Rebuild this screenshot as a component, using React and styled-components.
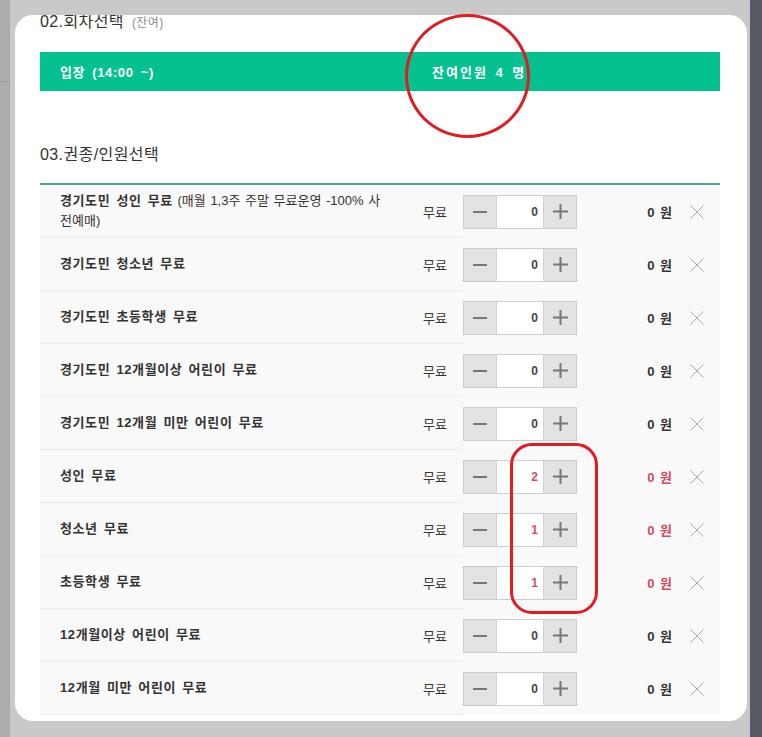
import React from "react";
import styled, { createGlobalStyle } from "styled-components";

const GlobalStyle = createGlobalStyle`
  html, body {
    margin: 0;
    padding: 0;
    background: #c9c9c9;
    font-family: "Liberation Sans", "Noto Sans CJK KR", sans-serif;
  }
`;

const tickets = [
  { name: "경기도민 성인 무료", note: "(매월 1,3주 주말 무료운영 -100% 사전예매)", qty: 0 },
  { name: "경기도민 청소년 무료", qty: 0 },
  { name: "경기도민 초등학생 무료", qty: 0 },
  { name: "경기도민 12개월이상 어린이 무료", qty: 0 },
  { name: "경기도민 12개월 미만 어린이 무료", qty: 0 },
  { name: "성인 무료", qty: 2 },
  { name: "청소년 무료", qty: 1 },
  { name: "초등학생 무료", qty: 1 },
  { name: "12개월이상 어린이 무료", qty: 0 },
  { name: "12개월 미만 어린이 무료", qty: 0 },
];

const Page = styled.div`
  position: relative;
  display: flex;
  height: 737px;
  overflow: hidden;
`;

const LeftStrip = styled.div`
  width: 10px;
  background: #acacac;
  flex-shrink: 0;

  &::after {
    content: "";
    display: block;
    margin-top: 81px;
    border-top: 1px solid #9d9d9d;
  }
`;

const RightStrip = styled.div`
  width: 12px;
  background: #565a63;
  flex-shrink: 0;
`;

const Stage = styled.div`
  flex: 1;
  padding: 15px 3px 16px 5px;
  display: flex;
`;

const Modal = styled.div`
  flex: 1;
  background: #fff;
  border-radius: 18px;
  padding: 0 27px 0 25px;
  overflow: hidden;
`;

const SectionTitle = styled.h2`
  margin: ${(p) => p.$top}px 0 0;
  font-size: 16px;
  line-height: 18px;
  font-weight: normal;
  letter-spacing: 0.4px;
  color: #333;
`;

const Sub = styled.span`
  margin-left: 8px;
  font-size: 12px;
  color: #8a8a8a;
`;

const SessionBar = styled.div`
  margin-top: 20px;
  height: 39px;
  display: flex;
  align-items: center;
  background: #05c08f;
  color: #fff;
  font-size: 13px;
  font-weight: bold;
  letter-spacing: 0.6px;
  word-spacing: 3px;
`;

const SessionTime = styled.div`
  width: 372px;
  padding-left: 20px;
`;

const Remaining = styled.div`
  letter-spacing: 2px;
  word-spacing: 2px;
`;

const Table = styled.div`
  margin-top: 19px;
  border-top: 2px solid #43a996;
`;

const Row = styled.div`
  display: grid;
  grid-template-columns: 423px 114px 95px 1fr;
  align-items: center;
  height: 53px;
  background: #f9f9f9;
  font-size: 13px;
  color: #333;
`;

const NameCell = styled.div`
  height: 100%;
  box-sizing: border-box;
  display: flex;
  align-items: center;
  padding: 0 16px 0 20px;
  border-bottom: 1px solid #ececec;
`;

const Name = styled.div`
  width: 326px;
  line-height: 20px;
  font-weight: bold;
  letter-spacing: 0.6px;
  word-spacing: 2px;
  word-break: break-all;
`;

const Note = styled.span`
  font-weight: normal;
  letter-spacing: 0;
  word-spacing: 1px;
`;

const Fee = styled.div`
  margin-left: auto;
`;

const Stepper = styled.div`
  display: flex;
  height: 34px;
  border: 1px solid #cdcdcd;
  box-sizing: border-box;
`;

const StepButton = styled.button`
  width: 32px;
  border: 0;
  padding: 0;
  background: #e3e3e3;
  display: flex;
  align-items: center;
  justify-content: center;
  cursor: pointer;
`;

const Qty = styled.div`
  flex: 1;
  background: #fff;
  border-left: 1px solid #d2d2d2;
  border-right: 1px solid #d2d2d2;
  display: flex;
  align-items: center;
  justify-content: flex-end;
  padding-right: 5px;
  font-size: 12px;
  font-weight: bold;
  color: ${(p) => (p.$active ? "#d34b5c" : "#444")};
`;

const Price = styled.div`
  text-align: right;
  font-weight: bold;
  word-spacing: 2px;
  color: ${(p) => (p.$active ? "#d34b5c" : "#333")};
`;

const Remove = styled.div`
  padding-left: 18px;
  display: flex;
  align-items: center;
`;

const Circle = styled.div`
  position: absolute;
  left: 405px;
  top: 14px;
  width: 125px;
  height: 124px;
  box-sizing: border-box;
  border: 3px solid #e11b22;
  border-radius: 50%;
`;

const Callout = styled.div`
  position: absolute;
  left: 510px;
  top: 443px;
  width: 88px;
  height: 171px;
  box-sizing: border-box;
  border: 3px solid #e11b22;
  border-radius: 22px;
`;

const Minus = () => (
  <svg width="14" height="14" viewBox="0 0 14 14">
    <rect x="0" y="6" width="14" height="2" fill="#777" />
  </svg>
);

const Plus = () => (
  <svg width="15" height="15" viewBox="0 0 15 15">
    <rect x="0" y="6.5" width="15" height="2" fill="#777" />
    <rect x="6.5" y="0" width="2" height="15" fill="#777" />
  </svg>
);

const Cross = () => (
  <svg width="14" height="14" viewBox="0 0 14 14">
    <path d="M0.5 0.5 L13.5 13.5 M13.5 0.5 L0.5 13.5" stroke="#aaa" strokeWidth="1" fill="none" />
  </svg>
);

export default function App() {
  return (
    <>
      <GlobalStyle />
      <Page>
        <LeftStrip />
        <Stage>
          <Modal>
            <SectionTitle $top={-2}>
              02.회차선택<Sub>(잔여)</Sub>
            </SectionTitle>
            <SessionBar>
              <SessionTime>입장 (14:00 ~)</SessionTime>
              <Remaining>잔여인원 4 명</Remaining>
            </SessionBar>
            <SectionTitle $top={55}>03.권종/인원선택</SectionTitle>
            <Table>
              {tickets.map((t) => (
                <Row key={t.name}>
                  <NameCell>
                    <Name>
                      {t.name}
                      {t.note && <Note> {t.note}</Note>}
                    </Name>
                    <Fee>무료</Fee>
                  </NameCell>
                  <Stepper>
                    <StepButton aria-label="빼기">
                      <Minus />
                    </StepButton>
                    <Qty $active={t.qty > 0}>{t.qty}</Qty>
                    <StepButton aria-label="더하기">
                      <Plus />
                    </StepButton>
                  </Stepper>
                  <Price $active={t.qty > 0}>0 원</Price>
                  <Remove>
                    <Cross />
                  </Remove>
                </Row>
              ))}
            </Table>
          </Modal>
        </Stage>
        <RightStrip />
        <Circle />
        <Callout />
      </Page>
    </>
  );
}
